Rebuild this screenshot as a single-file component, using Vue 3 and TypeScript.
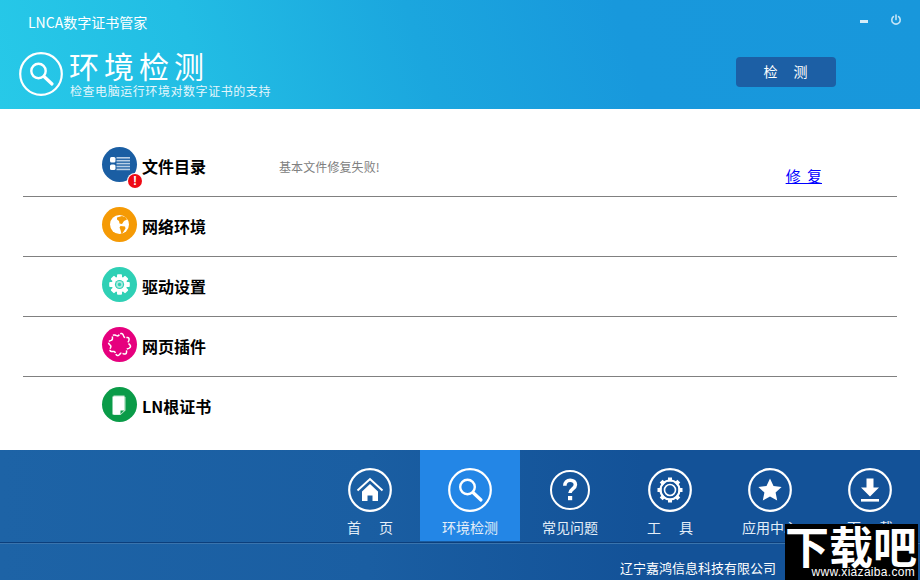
<script setup lang="ts">
const rows = [
  { key: 'files', name: '文件目录', color: '#1a5ea3', msg: '基本文件修复失败!', fix: true },
  { key: 'net', name: '网络环境', color: '#f59a05' },
  { key: 'driver', name: '驱动设置', color: '#2fd0b5' },
  { key: 'plugin', name: '网页插件', color: '#e6007e' },
  { key: 'cert', name: 'LN根证书', color: '#0a9b48' },
]

const navItems = [
  { key: 'home', label: '首　页', spaced: true },
  { key: 'check', label: '环境检测', active: true },
  { key: 'help', label: '常见问题' },
  { key: 'tools', label: '工　具', spaced: true },
  { key: 'apps', label: '应用中心' },
  { key: 'down', label: '下　载', spaced: true },
]

const gearTeeth = [0, 45, 90, 135, 180, 225, 270, 315]

// wavy ring of the plugin icon
function wavyRing(): string {
  const pts: string[] = []
  for (let i = 0; i <= 96; i++) {
    const a = (i / 96) * Math.PI * 2
    const r = 10 + 1.2 * Math.sin(a * 8)
    pts.push(`${(17.5 + r * Math.cos(a)).toFixed(2)} ${(17.5 + r * Math.sin(a)).toFixed(2)}`)
  }
  return 'M' + pts.join('L') + 'Z'
}
const pluginPath = wavyRing()
</script>

<template>
  <div class="app">
    <header class="top">
      <div class="top-bar">
        <span class="app-name">LNCA数字证书管家</span>
        <div class="win-btns">
          <span class="min-btn"></span>
          <svg class="power" width="12" height="12" viewBox="0 0 12 12" fill="none" stroke="#c4e4f6" stroke-width="1.6" stroke-linecap="round">
            <path d="M3.400 2.600a4.200 4.200 0 1 0 5.200 0" />
            <path d="M6 1v4.600" />
          </svg>
        </div>
      </div>
      <div class="top-main">
        <svg class="head-icon" width="44" height="44" viewBox="0 0 44 44" fill="none" stroke="#fff">
          <circle cx="22" cy="22" r="20.800" stroke-width="2.200" />
          <circle cx="19.500" cy="19" r="7.200" stroke-width="2.400" />
          <path d="M25 24.500l8 7.500" stroke-width="3.200" stroke-linecap="round" />
        </svg>
        <div class="head-text">
          <h1>环境检测</h1>
          <p>检查电脑运行环境对数字证书的支持</p>
        </div>
        <button class="check-btn">检　测</button>
      </div>
    </header>

    <main class="list">
      <div v-for="row in rows" :key="row.key" class="row">
        <span class="badge" :style="{ background: row.color }">
          <svg width="35" height="35" viewBox="0 0 35 35">
            <g v-if="row.key === 'files'" fill="#fff">
              <rect x="8" y="10" width="5.500" height="5.500" rx="1.500" />
              <rect x="8" y="17.500" width="5.500" height="5.500" rx="1.500" />
              <g fill="#b9cfe6">
                <rect x="14.500" y="10" width="13.500" height="1.600" />
                <rect x="14.500" y="12.900" width="13.500" height="1.600" />
                <rect x="14.500" y="15.800" width="13.500" height="1.600" />
                <rect x="14.500" y="18.700" width="13.500" height="1.600" />
                <rect x="14.500" y="21.600" width="13.500" height="1.600" />
              </g>
            </g>
            <g v-else-if="row.key === 'net'">
              <circle cx="17.500" cy="17.500" r="9.500" fill="#fff" />
              <path d="M15 10.500l5-1.500 4 1.500 1 2-3 1.500-2 3-2.500-.5-.5-2.500-2-1.500z" fill="#f59a05" />
              <path d="M18.500 19l4.500.5.5 2-2.500 4-1.500 1.500-1-4-1-2.500z" fill="#f59a05" />
            </g>
            <g v-else-if="row.key === 'driver'">
              <rect
                v-for="deg in gearTeeth"
                :key="deg"
                x="15"
                y="7.200"
                width="5"
                height="5"
                rx="1"
                fill="#fff"
                :transform="`rotate(${deg} 17.500 17.500)`"
              />
              <circle cx="17.500" cy="17.500" r="7.800" fill="#fff" />
              <circle cx="17.500" cy="17.500" r="4.600" fill="#2fd0b5" />
              <circle cx="17.500" cy="17.500" r="3.400" fill="#a9ecdf" />
              <circle cx="17.500" cy="17.500" r="1.700" fill="#2fd0b5" />
            </g>
            <path
              v-else-if="row.key === 'plugin'"
              :d="pluginPath"
              fill="none"
              stroke="#fff"
              stroke-width="1.500"
              stroke-dasharray="7 1.200"
            />
            <g v-else>
              <path d="M11.500 8.500h11v1l1 .5v13.500l-5 4.500h-7z" fill="#bfe5cd" />
              <path d="M10.500 9.500h11.500v13.500l-4.500 4.500h-7z" fill="#fff" />
              <path d="M18.500 27l3.500-3.500h-3.500z" fill="#0a9b48" />
            </g>
          </svg>
          <span v-if="row.key === 'files'" class="alert">!</span>
        </span>
        <span class="row-name">{{ row.name }}</span>
        <span class="row-msg">{{ row.msg }}</span>
        <a v-if="row.fix" class="fix-link" href="#">修 复</a>
      </div>
    </main>

    <footer class="bottom">
      <nav class="nav">
        <div
          v-for="item in navItems"
          :key="item.key"
          class="nav-item"
          :class="{ active: item.active, spaced: item.spaced }"
        >
          <svg width="44" height="44" viewBox="0 0 44 44" fill="none">
            <circle v-if="item.key === 'help'" cx="22" cy="22" r="19" stroke="#fff" stroke-width="2" />
            <circle v-else cx="22" cy="22" r="20.800" stroke="#fff" stroke-width="2.200" />
            <g v-if="item.key === 'home'" fill="#fff">
              <path d="M9.500 22.500L22 11l12.500 11.500" fill="none" stroke="#fff" stroke-width="2" />
              <path d="M22 16l8 7.500V33h-5.500v-5.500h-5V33H14v-9.500z" />
            </g>
            <g v-else-if="item.key === 'check'" stroke="#fff">
              <circle cx="19.500" cy="19" r="7.300" stroke-width="2.400" />
              <path d="M25 24.500l8 7.500" stroke-width="3.200" stroke-linecap="round" />
            </g>
            <g v-else-if="item.key === 'help'">
              <path d="M16.800 17.800c0-3.500 2.300-5.600 5.400-5.600s5.200 1.900 5.200 4.500c0 4-5.400 4.200-5.400 8.300" stroke="#fff" stroke-width="3.600" />
              <rect x="20" y="28" width="4.200" height="4.200" fill="#fff" />
            </g>
            <g v-else-if="item.key === 'tools'" stroke="#fff">
              <rect
                v-for="deg in gearTeeth"
                :key="deg"
                x="20"
                y="9.500"
                width="4"
                height="4"
                fill="#fff"
                stroke="none"
                :transform="`rotate(${deg} 22 22)`"
              />
              <circle cx="22" cy="22" r="9.500" stroke-width="2.200" />
              <circle cx="22" cy="22" r="5.500" stroke-width="1.600" />
            </g>
            <path
              v-else-if="item.key === 'apps'"
              d="M22 10.500l3.500 7.400 8.100 1-6 5.600 1.600 8-7.200-4-7.200 4 1.600-8-6-5.600 8.100-1z"
              fill="#fff"
            />
            <g v-else fill="#fff">
              <path d="M18.500 10.500h7v9h5.500L22 28.500 13 19.500h5.500z" />
              <rect x="13" y="31" width="18" height="2.600" />
            </g>
          </svg>
          <span class="nav-label">{{ item.label }}</span>
        </div>
      </nav>
      <div class="status">
        <span class="company">辽宁嘉鸿信息科技有限公司</span>
      </div>
      <div class="watermark">
        <span class="wm-big">下载吧</span>
        <span class="wm-url">www.xiazaiba.com</span>
      </div>
    </footer>
  </div>
</template>

<style>
html,
body {
  margin: 0;
  background: #fff;
}
</style>

<style scoped>
.app {
  width: 920px;
  height: 580px;
  display: flex;
  flex-direction: column;
  overflow: hidden;
  font-family: "Noto Sans CJK SC", "Noto Sans", sans-serif;
}

.top {
  flex: none;
  height: 109px;
  box-sizing: border-box;
  color: #fff;
  background: linear-gradient(72deg, #27c9e8 0%, #22bde4 22%, #1ba6de 46%, #1898dc 68%, #1897db 100%);
}
.top-bar {
  height: 47px;
  display: flex;
  justify-content: space-between;
  padding: 12px 18px 0 28px;
  box-sizing: border-box;
}
.app-name {
  font-size: 14px;
  line-height: 20px;
}
.win-btns {
  display: flex;
  align-items: flex-start;
  gap: 22px;
  padding-top: 2px;
}
.min-btn {
  width: 8px;
  height: 3px;
  margin-top: 6px;
  background: #d5ecf8;
}
.top-main {
  display: flex;
  padding-left: 19px;
  padding-right: 84px;
  align-items: flex-start;
}
.head-icon {
  margin-top: 5px;
}
.head-text {
  margin-left: 6px;
  flex: 1;
}
.head-text h1 {
  margin: 0;
  font-size: 30px;
  line-height: 36px;
  font-weight: 400;
  letter-spacing: 5px;
}
.head-text p {
  margin: 0 0 0 1px;
  font-size: 12px;
  line-height: 16px;
  letter-spacing: 0.56px;
  color: #e4f6fc;
}
.check-btn {
  width: 100px;
  height: 30px;
  margin-top: 10px;
  padding: 0 0 2px;
  border: none;
  border-radius: 4px;
  background: #1c5fa5;
  color: #fff;
  font-family: inherit;
  font-size: 14px;
  letter-spacing: 1px;
}

.list {
  flex: none;
  height: 341px;
  box-sizing: border-box;
  padding: 28px 23px 0;
}
.row {
  height: 60px;
  box-sizing: border-box;
  display: flex;
  align-items: flex-start;
  padding: 10px 0 0 79px;
  border-bottom: 1px solid #808080;
}
.row:last-child {
  border-bottom: none;
}
.badge {
  position: relative;
  width: 35px;
  height: 35px;
  border-radius: 50%;
  flex: none;
}
.badge svg {
  display: block;
}
.alert {
  position: absolute;
  right: -5px;
  bottom: -6px;
  width: 14px;
  height: 14px;
  border-radius: 50%;
  background: #ee0a14;
  box-shadow: 0 0 0 1px #fff;
  color: #fff;
  font: 700 12px/14px "Liberation Sans", sans-serif;
  text-align: center;
}
.row-name {
  width: 137px;
  margin-left: 5px;
  margin-top: 8px;
  font-size: 16px;
  line-height: 22px;
  font-weight: 700;
  color: #000;
  flex: none;
}
.row-msg {
  flex: 1;
  margin-top: 10px;
  font-size: 12px;
  line-height: 20px;
  letter-spacing: 0.1px;
  color: #808080;
}
.fix-link {
  margin: 19px 75px 0 0;
  font-size: 15px;
  line-height: 20px;
  word-spacing: 3px;
  color: #00f;
  text-decoration: underline;
}

.bottom {
  position: relative;
  flex: 1;
  background: linear-gradient(90deg, #1d63a6 0%, #1a5ea2 40%, #135298 70%, #135298 100%);
}
.nav {
  height: 91px;
  display: flex;
  justify-content: flex-end;
}
.nav-item {
  width: 100px;
  display: flex;
  flex-direction: column;
  align-items: center;
  padding-top: 18px;
  box-sizing: border-box;
  color: #e3eef8;
}
.nav-item.active {
  background: #2386e6;
}
.nav-item svg {
  flex: none;
}
.nav-label {
  margin-top: 5px;
  font-size: 14px;
  line-height: 20px;
}
.nav-item.spaced .nav-label {
  letter-spacing: 2px;
  margin-right: -2px;
}
.status {
  height: 38px;
  box-sizing: border-box;
  border-top: 1px solid #0c3f7c;
  margin-top: 1px;
  padding: 15px 144px 0 0;
  box-shadow: inset 0 1px 0 #3a74ad;
  text-align: right;
}
.company {
  display: block;
  font-size: 13px;
  line-height: 20px;
  color: #fff;
}
.watermark {
  position: absolute;
  right: 2px;
  bottom: 0;
  width: 133px;
  height: 56px;
  background: #000;
  color: #fff;
  overflow: hidden;
}
.wm-big {
  display: block;
  font-size: 44px;
  line-height: 43px;
  font-weight: 700;
  white-space: nowrap;
}
.wm-url {
  position: absolute;
  right: 3px;
  bottom: 2px;
  font-family: "Liberation Sans", sans-serif;
  font-size: 12px;
  line-height: 11px;
  letter-spacing: 0.3px;
}
</style>
